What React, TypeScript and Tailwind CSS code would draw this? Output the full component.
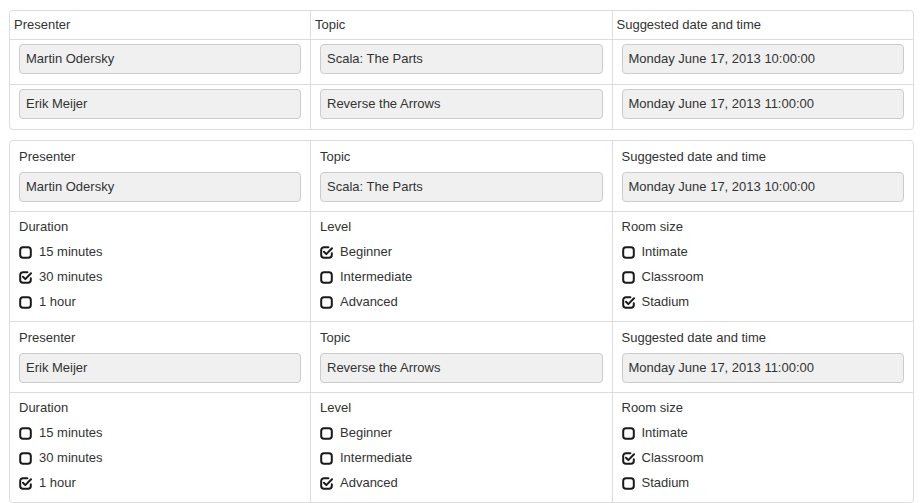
import React from "react";

type Opt = { label: string; checked: boolean };

const EmptyBox = () => (
  <svg width="13" height="13" viewBox="0 0 13 13" className="block">
    <rect x="1.2" y="1.2" width="10.6" height="10.6" rx="2.8" fill="none" stroke="#1a1a1a" strokeWidth="2" />
  </svg>
);

const CheckedBox = () => (
  <svg width="13" height="13" viewBox="0 0 13 13" className="block">
    <path
      d="M8.4 1.2 H4 A2.8 2.8 0 0 0 1.2 4 V9 A2.8 2.8 0 0 0 4 11.8 H9 A2.8 2.8 0 0 0 11.8 9 V7.2"
      fill="none"
      stroke="#1a1a1a"
      strokeWidth="2"
      strokeLinecap="round"
    />
    <path d="M4 5.8 L6.3 8.1 L12 2.3" fill="none" stroke="#1a1a1a" strokeWidth="2" strokeLinecap="round" strokeLinejoin="round" />
  </svg>
);

const Input = ({ value }: { value: string }) => (
  <div className="h-[30px] border border-[#cccccc] bg-[#f0f0f0] rounded-[4px] px-[6px] flex items-center text-[#333] leading-5">
    {value}
  </div>
);

const records = [
  {
    presenter: "Martin Odersky",
    topic: "Scala: The Parts",
    date: "Monday June 17, 2013 10:00:00",
    duration: [
      { label: "15 minutes", checked: false },
      { label: "30 minutes", checked: true },
      { label: "1 hour", checked: false },
    ],
    level: [
      { label: "Beginner", checked: true },
      { label: "Intermediate", checked: false },
      { label: "Advanced", checked: false },
    ],
    room: [
      { label: "Intimate", checked: false },
      { label: "Classroom", checked: false },
      { label: "Stadium", checked: true },
    ],
  },
  {
    presenter: "Erik Meijer",
    topic: "Reverse the Arrows",
    date: "Monday June 17, 2013 11:00:00",
    duration: [
      { label: "15 minutes", checked: false },
      { label: "30 minutes", checked: false },
      { label: "1 hour", checked: true },
    ],
    level: [
      { label: "Beginner", checked: false },
      { label: "Intermediate", checked: false },
      { label: "Advanced", checked: true },
    ],
    room: [
      { label: "Intimate", checked: false },
      { label: "Classroom", checked: true },
      { label: "Stadium", checked: false },
    ],
  },
];

const FieldCell = ({ label, value, first }: { label: string; value: string; first?: boolean }) => (
  <div className={first ? "px-[9px] pt-[6px] pb-[9px]" : "border-l border-[#dddddd] px-[9px] pt-[6px] pb-[9px]"}>
    <div className="leading-5 h-5 mb-[5px] text-[#333]">{label}</div>
    <Input value={value} />
  </div>
);

const OptCell = ({ label, opts, first }: { label: string; opts: Opt[]; first?: boolean }) => (
  <div className={first ? "px-[9px] pt-[5px] pb-[9px]" : "border-l border-[#dddddd] px-[9px] pt-[5px] pb-[9px]"}>
    <div className="leading-5 h-5 mb-[5px] text-[#333]">{label}</div>
    <div className="flex flex-col gap-[5px]">
      {opts.map((o) => (
        <div key={o.label} className="flex items-center h-5 leading-5 text-[#333]">
          <span className="w-[13px] h-[13px] mr-[7px] mt-[1px]">{o.checked ? <CheckedBox /> : <EmptyBox />}</span>
          <span>{o.label}</span>
        </div>
      ))}
    </div>
  </div>
);

export default function App() {
  return (
    <div className="bg-white w-[922px] h-[503px] overflow-hidden pt-[10px] pl-[9px] pr-[8px] font-['Liberation_Sans',Arial,sans-serif] text-[13px] text-[#333]">
      <div className="border border-[#dddddd] rounded-[4px]">
        <div className="grid grid-cols-[300px_1fr_1fr] leading-5">
          <div className="px-[4px] py-[4px]">Presenter</div>
          <div className="border-l border-[#dddddd] px-[4px] py-[4px]">Topic</div>
          <div className="border-l border-[#dddddd] px-[4px] py-[4px]">Suggested date and time</div>
        </div>
        {records.map((r) => (
          <div key={r.presenter} className="grid grid-cols-[300px_1fr_1fr] border-t border-[#dddddd]">
            <div className="px-[9px] pt-[4px] pb-[10px]">
              <Input value={r.presenter} />
            </div>
            <div className="border-l border-[#dddddd] px-[9px] pt-[4px] pb-[10px]">
              <Input value={r.topic} />
            </div>
            <div className="border-l border-[#dddddd] px-[9px] pt-[4px] pb-[10px]">
              <Input value={r.date} />
            </div>
          </div>
        ))}
      </div>

      <div className="mt-[10px] border border-[#dddddd] rounded-[4px]">
        {records.map((r, i) => (
          <React.Fragment key={r.presenter}>
            <div className={i === 0 ? "grid grid-cols-[300px_1fr_1fr]" : "grid grid-cols-[300px_1fr_1fr] border-t border-[#dddddd]"}>
              <FieldCell first label="Presenter" value={r.presenter} />
              <FieldCell label="Topic" value={r.topic} />
              <FieldCell label="Suggested date and time" value={r.date} />
            </div>
            <div className="grid grid-cols-[300px_1fr_1fr] border-t border-[#dddddd]">
              <OptCell first label="Duration" opts={r.duration} />
              <OptCell label="Level" opts={r.level} />
              <OptCell label="Room size" opts={r.room} />
            </div>
          </React.Fragment>
        ))}
      </div>
    </div>
  );
}
